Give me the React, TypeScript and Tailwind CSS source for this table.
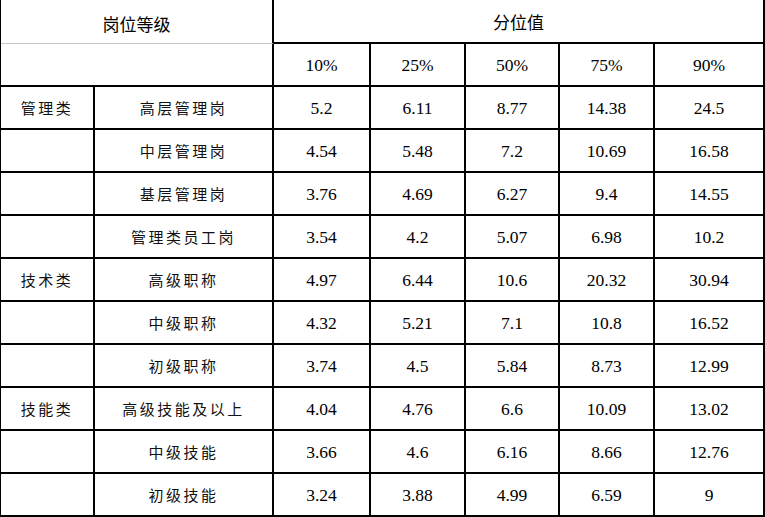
const COLS = "grid-cols-[94px_179px_97px_95px_94px_95px_110px]";

interface Row {
  group?: string;
  level: string;
  values: string[];
}

const PERCENTILES = ["10%", "25%", "50%", "75%", "90%"];

const ROWS: Row[] = [
  { group: "管理类", level: "高层管理岗", values: ["5.2", "6.11", "8.77", "14.38", "24.5"] },
  { level: "中层管理岗", values: ["4.54", "5.48", "7.2", "10.69", "16.58"] },
  { level: "基层管理岗", values: ["3.76", "4.69", "6.27", "9.4", "14.55"] },
  { level: "管理类员工岗", values: ["3.54", "4.2", "5.07", "6.98", "10.2"] },
  { group: "技术类", level: "高级职称", values: ["4.97", "6.44", "10.6", "20.32", "30.94"] },
  { level: "中级职称", values: ["4.32", "5.21", "7.1", "10.8", "16.52"] },
  { level: "初级职称", values: ["3.74", "4.5", "5.84", "8.73", "12.99"] },
  { group: "技能类", level: "高级技能及以上", values: ["4.04", "4.76", "6.6", "10.09", "13.02"] },
  { level: "中级技能", values: ["3.66", "4.6", "6.16", "8.66", "12.76"] },
  { level: "初级技能", values: ["3.24", "3.88", "4.99", "6.59", "9"] },
];

const cell = "flex items-center justify-center border-r-2 border-b-2 border-black pt-[2px]";
const cjk = "font-['Noto_Sans_CJK_SC',sans-serif] text-[15px] tracking-[2.5px] text-[#111]";
const num = "font-['Liberation_Serif','Times_New_Roman',serif] text-[17.5px] text-black";
const head = "font-['Noto_Sans_CJK_SC',sans-serif] text-[17px] font-normal text-black";

export default function App() {
  return (
    <div className="w-[765px] h-[517px] bg-white overflow-hidden">
      <div className={`grid ${COLS} grid-rows-[44px_repeat(11,43px)] border-l border-black`}>
        {/* 表头 */}
        <div className="col-span-2 flex items-center justify-center border-r-2 border-black border-b border-b-[#c4c9ce] pt-1">
          <span className={head}>岗位等级</span>
        </div>
        <div className={`col-span-5 ${cell} pt-1`}>
          <span className={head}>分位值</span>
        </div>

        <div className={`col-span-2 ${cell}`} />
        {PERCENTILES.map((p) => (
          <div key={p} className={cell}>
            <span className={num}>{p}</span>
          </div>
        ))}

        {/* 数据 */}
        {ROWS.map((row) => (
          <div key={row.level} className="contents">
            <div className={cell}>
              <span className={cjk}>{row.group ?? ""}</span>
            </div>
            <div className={cell}>
              <span className={cjk}>{row.level}</span>
            </div>
            {row.values.map((v, i) => (
              <div key={i} className={cell}>
                <span className={num}>{v}</span>
              </div>
            ))}
          </div>
        ))}
      </div>
    </div>
  );
}
